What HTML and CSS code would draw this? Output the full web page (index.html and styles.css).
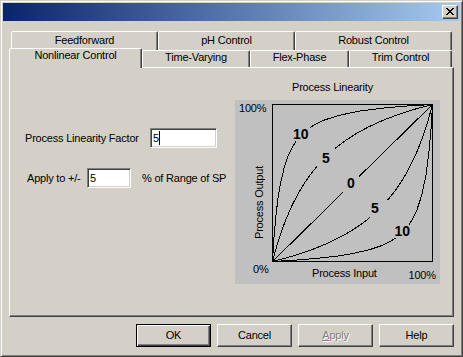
FILE: index.html
```html
<!DOCTYPE html>
<html>
<head>
<meta charset="utf-8">
<link rel="stylesheet" href="styles.css">
</head>
<body>
<div class="window">
  <div class="titlebar">
    <div class="close">
      <svg width="8" height="7" viewBox="0 0 8 7" shape-rendering="crispEdges"><path d="M0 0h2v1h-2z M6 0h2v1h-2z M1 1h2v1h-2z M5 1h2v1h-2z M2 2h4v1h-4z M3 3h2v1h-2z M2 4h4v1h-4z M1 5h2v1h-2z M5 5h2v1h-2z M0 6h2v1h-2z M6 6h2v1h-2z" fill="#000"/></svg>
    </div>
  </div>
  <div class="body">
    <div class="row-back">
      <div class="tab back w-ff">Feedforward</div>
      <div class="tab back w-ph">pH Control</div>
      <div class="tab back w-rb">Robust Control</div>
    </div>
    <div class="row-front">
      <div class="tab front selected w-nl">Nonlinear Control</div>
      <div class="tab front w-tv">Time-Varying</div>
      <div class="tab front w-fp">Flex-Phase</div>
      <div class="tab front w-tc">Trim Control</div>
    </div>
    <div class="panel">
      <div class="form">
        <div class="row1">
          <span class="lbl1">Process Linearity Factor</span>
          <div class="field f1">5<span class="caret"></span></div>
        </div>
        <div class="row2">
          <span class="lbl2">Apply to +/-</span>
          <div class="field f2">5</div>
          <span class="unit">% of Range of SP</span>
        </div>
      </div>
      <div class="chart-col">
        <div class="chart-title">Process Linearity</div>
        <div class="chart">
          <svg width="205" height="184" viewBox="0 0 205 184" class="plot">
            <rect x="37.5" y="4.5" width="160" height="157" fill="none" stroke="#000" shape-rendering="crispEdges"/>
            <g fill="none" stroke="#000" stroke-width="1">
              <polyline points="37.5,161.5 108,92.3"/>
              <polyline points="124,76.6 197.5,4.5"/>
              <polyline points="37.5,161.5 38.3,147.8 39.1,136.2 40.7,117.7 43.1,97.4 45.5,83 49.5,66.4 53.5,54.9 57.5,46.7 61.5,40.6"/>
              <polyline points="75.3,27.4 82.3,23.2 90.3,19.7 104.7,15.2 125.5,10.9 149.5,7.9 173.5,5.9 197.5,4.5"/>
              <polyline points="37.5,161.5 51.4,160.7 63.3,159.9 82.1,158.4 102.8,156 117.5,153.6 134.5,149.7 146.1,145.8 154.5,141.9 160.7,137.9"/>
              <polyline points="174.1,124.4 178.5,117.5 182,109.7 186.6,95.6 191,75.2 194,51.6 196.1,28 197.5,4.5"/>
              <polyline points="37.5,161.5 40.7,149.6 45.5,134.2 50.3,121 56.7,106.1 63.1,93.7 69.5,83 76.7,72.8 82.3,65.9"/>
              <polyline points="99.9,48.6 109.5,41.2 120.7,33.9 133.5,26.9 149.5,19.7 165.5,13.7 181.5,8.7 197.5,4.5"/>
              <polyline points="37.5,161.5 49.6,158.4 65.3,153.7 78.8,148.9 94,142.7 106.6,136.4 117.5,130.1 127.9,123 134.9,117.5"/>
              <polyline points="152.5,100.3 160.1,90.8 167.5,79.9 174.6,67.3 182,51.6 188.1,35.9 193.2,20.2 197.5,4.5"/>
            </g>
            <g class="axis">
              <text x="4" y="12">100%</text>
              <text x="18" y="173">0%</text>
              <text x="77" y="177">Process Input</text>
              <text x="173.5" y="179">100%</text>
              <text transform="translate(28,139) rotate(-90)">Process Output</text>
            </g>
            <g class="curve-lbl" text-anchor="middle">
              <text x="65.8" y="38.5">10</text>
              <text x="90.8" y="62.5">5</text>
              <text x="115.8" y="88">0</text>
              <text x="140" y="112.5">5</text>
              <text x="167.2" y="136">10</text>
            </g>
          </svg>
        </div>
      </div>
    </div>
    <div class="buttons">
      <div class="btn default">OK</div>
      <div class="btn">Cancel</div>
      <div class="btn disabled"><u>A</u>pply</div>
      <div class="btn">Help</div>
    </div>
  </div>
</div>
</body>
</html>
```
FILE: styles.css
```css
* { box-sizing: border-box; }
html, body { margin: 0; padding: 0; }
body {
  width: 463px;
  height: 357px;
  overflow: hidden;
  background: #d4d0c8;
  font-family: "Liberation Sans", Arial, sans-serif;
  font-size: 11px;
  letter-spacing: -0.2px;
  color: #000;
}
.window {
  width: 463px;
  height: 357px;
  display: flex;
  flex-direction: column;
  border: 1px solid;
  border-color: #d4d0c8 #404040 #404040 #d4d0c8;
  box-shadow: inset 1px 1px #fff, inset -1px -1px #808080;
  padding: 2px;
  background: #d4d0c8;
}
.titlebar {
  height: 18px;
  flex: none;
  background: linear-gradient(to right, #0a246a, #a6caf0);
  display: flex;
  justify-content: flex-end;
  align-items: center;
  padding-right: 2px;
}
.close {
  width: 16px;
  height: 14px;
  background: #d4d0c8;
  border: 1px solid;
  border-color: #fff #404040 #404040 #fff;
  box-shadow: inset -1px -1px #808080;
  padding: 2px 0 0 3px;
}
.close svg { display: block; }
.body {
  flex: 1;
  padding: 10px 6px 7px 6px;
  display: flex;
  flex-direction: column;
}
.row-back {
  display: flex;
  margin-left: 2px;
  height: 19px;
}
.row-front {
  display: flex;
  height: 17px;
  position: relative;
  z-index: 1;
}
.tab {
  border: 1px solid;
  border-bottom: none;
  border-color: #fff #404040 transparent #fff;
  box-shadow: inset -1px 0 #808080;
  border-radius: 2px 2px 0 0;
  text-align: center;
  line-height: 13px;
  background: #d4d0c8;
  white-space: nowrap;
  flex: none;
}
.tab.back { height: 19px; padding-top: 2px; }
.tab.front { height: 17px; padding-top: 0; }
.tab.selected {
  height: 20px;
  margin-top: -2px;
  margin-bottom: -1px;
  position: relative;
  z-index: 2;
}
.w-ff { width: 147px; }
.w-ph { width: 137px; }
.w-rb { width: 157px; }
.w-nl { width: 133px; }
.w-tv { width: 108px; }
.w-fp { width: 99px; }
.w-tc { width: 103px; }
.panel {
  height: 250px;
  flex: none;
  border: 1px solid;
  border-color: #fff #404040 #404040 #fff;
  box-shadow: inset -1px -1px #808080;
  display: flex;
}
.form {
  width: 225px;
  flex: none;
  padding: 60px 0 0 15px;
}
.row1, .row2 {
  display: flex;
  align-items: center;
  height: 20px;
  white-space: nowrap;
}
.row2 { margin-top: 20px; padding-left: 2px; }
.lbl1 { width: 125px; flex: none; }
.lbl2 { width: 60px; flex: none; }
.unit { margin-left: 11px; }
.field {
  height: 20px;
  flex: none;
  background: #fff;
  border: 1px solid;
  border-color: #808080 #fff #fff #808080;
  box-shadow: inset 1px 1px #404040, inset -1px -1px #d4d0c8;
  padding: 2px 0 0 2px;
  line-height: 14px;
  display: flex;
  align-items: flex-start;
}
.f1 { width: 67px; }
.f2 { width: 44px; }
.caret {
  display: block;
  width: 1px;
  height: 14px;
  background: #000;
  margin-left: 0;
}
.chart-col {
  padding-top: 13px;
  flex: none;
}
.chart-title {
  line-height: 13px;
  padding-left: 57px;
}
.chart {
  margin-top: 6px;
  width: 205px;
  height: 184px;
  background: #c0c0c0;
}
.plot { display: block; }
.plot polyline { shape-rendering: crispEdges; }
.axis text {
  font-family: "Liberation Sans", Arial, sans-serif;
  font-size: 11px;
  letter-spacing: -0.2px;
  fill: #000;
}
.curve-lbl text {
  font-family: "Liberation Sans", Arial, sans-serif;
  font-size: 14px;
  font-weight: bold;
  letter-spacing: 0;
  fill: #000;
}
.buttons {
  margin-top: 7px;
  display: flex;
  justify-content: flex-end;
  gap: 6px;
  height: 23px;
}
.btn {
  width: 75px;
  height: 23px;
  border: 1px solid;
  border-color: #fff #404040 #404040 #fff;
  box-shadow: inset -1px -1px #808080;
  text-align: center;
  line-height: 20px;
}
.btn.default {
  border-color: #000;
  box-shadow: inset 1px 1px #fff, inset -1px -1px #404040, inset -2px -2px #808080;
}
.btn.disabled {
  color: #808080;
  text-shadow: 1px 1px #fff;
}
.btn u { text-decoration: underline; }
```
